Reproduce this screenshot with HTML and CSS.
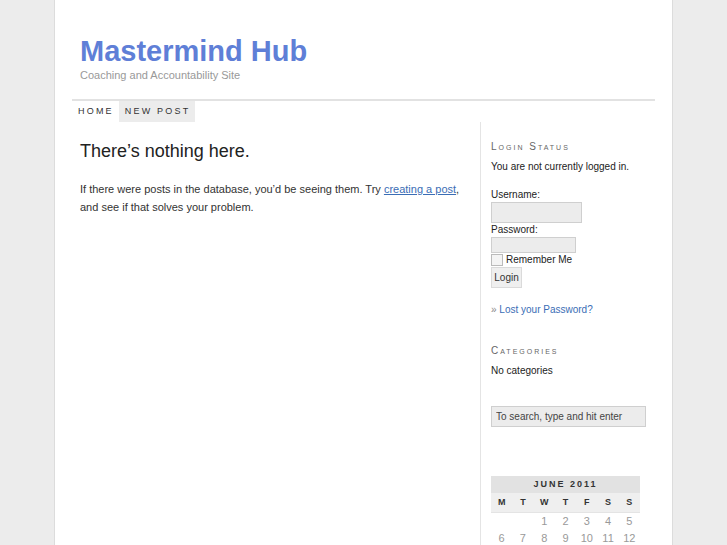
FILE: index.html
```html
<!DOCTYPE html>
<html>
<head>
<meta charset="utf-8">
<title>Mastermind Hub</title>
<link rel="stylesheet" href="styles.css">
</head>
<body>
<div class="page">
  <header class="header">
    <h1 class="site-title">Mastermind Hub</h1>
    <p class="tagline">Coaching and Accountability Site</p>
  </header>
  <nav class="nav">
    <a class="nav-item" href="#">Home</a>
    <a class="nav-item active" href="#">New Post</a>
  </nav>
  <div class="main">
    <section class="content">
      <h2 class="content-title">There’s nothing here.</h2>
      <p class="content-text">If there were posts in the database, you’d be seeing them. Try <a class="inline-link" href="#">creating a post</a>, and see if that solves your problem.</p>
    </section>
    <aside class="sidebar">
      <div class="widget widget-login">
        <h3 class="widget-title">Login Status</h3>
        <p class="widget-text">You are not currently logged in.</p>
        <form class="login-form">
          <label class="field-label">Username:</label>
          <input class="field field-user" type="text">
          <label class="field-label">Password:</label>
          <input class="field field-pass" type="password">
          <label class="remember"><input class="check" type="checkbox"> Remember Me</label>
          <button class="btn" type="button">Login</button>
        </form>
        <p class="lost"><span class="raquo">»</span> <a class="side-link" href="#">Lost your Password?</a></p>
      </div>
      <div class="widget widget-cats">
        <h3 class="widget-title">Categories</h3>
        <p class="widget-text">No categories</p>
      </div>
      <div class="search">
        <input class="search-field" type="text" value="To search, type and hit enter">
      </div>
      <table class="calendar">
        <caption class="cal-caption">June 2011</caption>
        <thead>
          <tr><th>M</th><th>T</th><th>W</th><th>T</th><th>F</th><th>S</th><th>S</th></tr>
        </thead>
        <tbody>
          <tr><td></td><td></td><td>1</td><td>2</td><td>3</td><td>4</td><td>5</td></tr>
          <tr><td>6</td><td>7</td><td>8</td><td>9</td><td>10</td><td>11</td><td>12</td></tr>
          <tr><td>13</td><td>14</td><td>15</td><td>16</td><td>17</td><td>18</td><td>19</td></tr>
        </tbody>
      </table>
    </aside>
  </div>
</div>
</body>
</html>
```

FILE: styles.css
```css
* { box-sizing: border-box; }

html, body {
  margin: 0;
  padding: 0;
  height: 100%;
}

body {
  background: #ececec;
  font-family: "Liberation Sans", Arial, sans-serif;
  color: #333;
  font-size: 11px;
}

.page {
  width: 619px;
  min-height: 100%;
  margin: 0 auto;
  background: #fff;
  border-left: 1px solid #dcdcdc;
  border-right: 1px solid #dcdcdc;
  display: flex;
  flex-direction: column;
}

.header {
  padding: 34px 0 0 25px;
  height: 99px;
}

.site-title {
  margin: 0;
  font-size: 29px;
  line-height: 34px;
  font-weight: bold;
  color: #5f7fd7;
}

.tagline {
  margin: 0;
  font-size: 11px;
  line-height: 14px;
  color: #999;
}

.nav {
  margin: 0 17px;
  border-top: 2px solid #e2e2e2;
  display: flex;
}

.nav-item {
  display: block;
  padding: 0 5px 0 6px;
  height: 21px;
  line-height: 21px;
  font-size: 9px;
  letter-spacing: 2.2px;
  text-transform: uppercase;
  color: #333;
  text-decoration: none;
}

.nav-item.active {
  background: #ececec;
}

.main {
  flex: 1;
  display: flex;
  margin: 0 17px;
}

.content {
  width: 408px;
  padding: 18px 0 0 8px;
}

.content-title {
  margin: 0;
  font-size: 18px;
  line-height: 22px;
  font-weight: normal;
  color: #222;
}

.content-text {
  margin: 18px 0 0;
  font-size: 11px;
  line-height: 18px;
  color: #333;
}

.inline-link {
  color: #3a6db5;
  text-decoration: underline;
}

.sidebar {
  width: 174px;
  border-left: 1px solid #e4e4e4;
  padding: 18px 0 0 10px;
  font-size: 10px;
}

.widget-title {
  margin: 0;
  font-size: 10px;
  line-height: 14px;
  font-weight: normal;
  font-variant: small-caps;
  letter-spacing: 2px;
  color: #666;
}

.widget-text {
  margin: 6px 0 0;
  line-height: 14px;
  color: #222;
}

.login-form {
  margin-top: 14px;
  display: flex;
  flex-direction: column;
  align-items: flex-start;
}

.field-label {
  display: block;
  line-height: 14px;
  color: #222;
}

.field {
  display: block;
  margin: 0;
  padding: 0 3px;
  background: #ececec;
  border: 1px solid #cfcfcf;
  font-family: inherit;
  font-size: 10px;
}

.field-user {
  width: 91px;
  height: 21px;
}

.field-pass {
  width: 85px;
  height: 16px;
}

.remember {
  display: flex;
  align-items: center;
  height: 13px;
  line-height: 13px;
  color: #222;
}

.check {
  appearance: none;
  -webkit-appearance: none;
  width: 12px;
  height: 12px;
  margin: 0 3px 0 0;
  border: 1px solid #bbb;
  background: #f4f4f4;
}

.btn {
  margin-top: 1px;
  width: 31px;
  height: 21px;
  padding: 0;
  background: #efefef;
  border: 1px solid #dadada;
  font-family: inherit;
  font-size: 10px;
  color: #333;
}

.lost {
  margin: 15px 0 0;
  line-height: 14px;
}

.raquo {
  color: #888;
}

.side-link {
  color: #3a6db5;
  text-decoration: none;
}

.widget-cats {
  margin-top: 27px;
}

.search {
  margin-top: 28px;
}

.search-field {
  width: 155px;
  height: 21px;
  margin: 0;
  padding: 0 4px;
  background: #ececec;
  border: 1px solid #cfcfcf;
  font-family: inherit;
  font-size: 10px;
  color: #444;
}

.calendar {
  margin-top: 49px;
  width: 149px;
  border-collapse: collapse;
  table-layout: fixed;
}

.cal-caption {
  height: 17px;
  line-height: 17px;
  background: #e2e2e2;
  font-size: 9px;
  font-weight: bold;
  letter-spacing: 2px;
  text-transform: uppercase;
  color: #333;
  text-align: center;
}

.calendar th {
  height: 19px;
  padding: 0;
  background: #efefef;
  border-bottom: 1px solid #e4e4e4;
  font-size: 9px;
  font-weight: bold;
  color: #333;
  text-align: center;
}

.calendar td {
  height: 17px;
  padding: 0;
  font-size: 11px;
  color: #999;
  text-align: center;
}
```
